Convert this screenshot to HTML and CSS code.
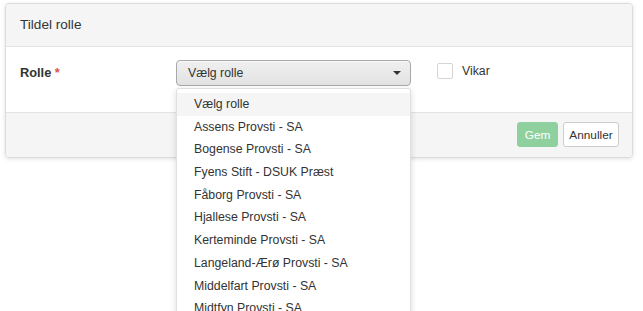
FILE: index.html
```html
<!DOCTYPE html>
<html lang="da">
<head>
    <meta charset="UTF-8">
    <title>Tildel rolle</title>
    <link rel="stylesheet" href="styles.css">
</head>
<body>
    <div class="modal">
        <div class="modal-header">Tildel rolle</div>
        <div class="modal-body">
            <div class="form-row">
                <label class="form-label">Rolle <span class="required">*</span></label>
                <div class="select-wrap">
                    <div class="select">
                        <span>Vælg rolle</span>
                        <span class="caret"></span>
                    </div>
                    <ul class="dropdown">
                        <li class="active">Vælg rolle</li>
                        <li>Assens Provsti - SA</li>
                        <li>Bogense Provsti - SA</li>
                        <li>Fyens Stift - DSUK Præst</li>
                        <li>Fåborg Provsti - SA</li>
                        <li>Hjallese Provsti - SA</li>
                        <li>Kerteminde Provsti - SA</li>
                        <li>Langeland-Ærø Provsti - SA</li>
                        <li>Middelfart Provsti - SA</li>
                        <li>Midtfyn Provsti - SA</li>
                    </ul>
                </div>
                <label class="check">
                    <span class="box"></span>
                    Vikar
                </label>
            </div>
        </div>
        <div class="modal-footer">
            <button class="btn btn-save" disabled>Gem</button>
            <button class="btn btn-cancel">Annuller</button>
        </div>
    </div>
</body>
</html>
```

FILE: styles.css
```css
html {
    overflow: hidden;
}
body {
    margin: 0;
    height: 100vh;
    overflow: hidden;
    font-family: "Liberation Sans", Arial, sans-serif;
    font-size: 12.3px;
    color: #333;
    background-color: #fff;
}
.modal {
    margin: 3px 10px 0 5px;
    border: 1px solid #dcdcdc;
    border-radius: 4px;
    box-shadow: 0 1px 4px rgba(0,0,0,0.12);
}
.modal-header {
    height: 42px;
    line-height: 42px;
    padding: 0 14px;
    font-size: 13.6px;
    background-color: #f5f5f5;
    border-bottom: 1px solid #e3e3e3;
    border-radius: 4px 4px 0 0;
}
.modal-body {
    height: 65px;
    padding: 13px 14px 0 14px;
    box-sizing: border-box;
    background-color: #fff;
}
.form-row {
    display: flex;
    align-items: flex-start;
}
.form-label {
    width: 156px;
    font-weight: bold;
    font-size: 12.8px;
    padding-top: 5px;
}
.required {
    color: #d9534f;
}
.select-wrap {
    position: relative;
    width: 235px;
}
.select {
    display: flex;
    justify-content: space-between;
    align-items: center;
    height: 26px;
    box-sizing: border-box;
    padding: 0 9px 0 11px;
    border: 1px solid #a9a9a9;
    border-radius: 4px;
    background: linear-gradient(#f0f0f0, #e2e2e2);
    box-shadow: inset 0 1px 0 rgba(255,255,255,0.6);
}
.caret {
    width: 0;
    height: 0;
    border-left: 4px solid transparent;
    border-right: 4px solid transparent;
    border-top: 4px solid #333;
}
.dropdown {
    position: absolute;
    top: 28px;
    left: 0;
    width: 235px;
    margin: 0;
    padding: 4px 0 0 0;
    list-style: none;
    background-color: #fff;
    border: 1px solid #e0e0e0;
    border-radius: 3px;
    box-shadow: 0 2px 6px rgba(0,0,0,0.15);
    box-sizing: border-box;
    z-index: 10;
}
.dropdown li {
    height: 22.7px;
    line-height: 22.7px;
    padding-left: 17px;
    white-space: nowrap;
}
.dropdown li.active {
    background-color: #f5f5f5;
}
.check {
    display: flex;
    align-items: center;
    gap: 9px;
    margin-left: 26px;
    padding-top: 3px;
}
.box {
    width: 14px;
    height: 14px;
    border: 1px solid #d5d5d5;
    border-radius: 2px;
    background-color: #fff;
}
.modal-footer {
    display: flex;
    justify-content: flex-end;
    gap: 5px;
    height: 45px;
    box-sizing: border-box;
    padding: 9px 13px 0 0;
    background-color: #f5f5f5;
    border-top: 1px solid #e3e3e3;
    border-radius: 0 0 4px 4px;
}
.btn {
    height: 25px;
    padding: 0;
    font-family: "Liberation Sans", Arial, sans-serif;
    font-size: 11.8px;
    border-radius: 3px;
    cursor: pointer;
}
.btn-save {
    width: 41px;
    color: #fff;
    background-color: #8fd19e;
    border: 1px solid #8fd19e;
    cursor: default;
}
.btn-cancel {
    width: 56px;
    color: #333;
    background-color: #fff;
    border: 1px solid #ccc;
}
```
